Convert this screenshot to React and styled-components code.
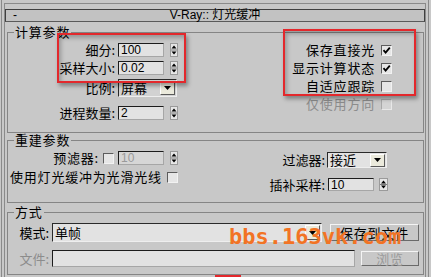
import React from 'react';
import styled, { createGlobalStyle } from 'styled-components';

const Global = createGlobalStyle`
  html, body { margin: 0; padding: 0; background: #c8c8c8; }
  body {
    font-family: "Noto Sans CJK SC", "Liberation Sans", sans-serif;
    color: #000;
  }
`;

const Screen = styled.div`
  position: relative;
  width: 431px;
  height: 277px;
  overflow: hidden;
  background: #c8c8c8;
  box-sizing: border-box;
  padding: 0 2px 0 1px;
`;

const Frame = styled.div`
  height: 100%;
  box-sizing: border-box;
  border-left: 1px solid #8a8a8a;
  border-right: 1px solid #8a8a8a;
  padding: 3px 2px 0 2px;
`;

const Rollout = styled.div`
  height: 100%;
  box-sizing: border-box;
  border-top: 1px solid #8a8a8a;
  border-left: 1px solid #8a8a8a;
  border-right: 1px solid #8a8a8a;
  padding-top: 5px;
`;

const Header = styled.div`
  box-sizing: border-box;
  height: 13px;
  display: grid;
  grid-template-columns: 1fr auto 1fr;
  align-items: center;
  background: #c2c2c2;
  border: 1px solid #404040;
  border-bottom-color: #5a5a5a;
  font-family: "Liberation Sans", "Noto Sans CJK SC", sans-serif;
  font-size: 12px;
  line-height: 11px;
`;

const HeaderDash = styled.span`
  padding-left: 7px;
`;

const HeaderTitle = styled.span`
  white-space: nowrap;
`;

const Group = styled.fieldset`
  margin: ${p => p.$mt}px 1px 0 2px;
  padding: 0;
  border: 1px solid #858585;
  height: ${p => p.$h}px;
  box-sizing: border-box;
  min-width: 0;
`;

const Legend = styled.legend`
  margin-left: 6px;
  padding: 0 1px;
  font-size: 13px;
  letter-spacing: 0.8px;
  line-height: 14px;
  height: 14px;
`;

const GroupBody = styled.div`
  display: flex;
  justify-content: space-between;
  align-items: flex-start;
`;

const Column = styled.div`
  display: flex;
  flex-direction: column;
  align-items: ${p => p.$align || 'flex-start'};
  padding: ${p => p.$pt || 0}px ${p => p.$pr || 0}px 0 ${p => p.$pl || 0}px;
`;

const Row = styled.div`
  display: flex;
  align-items: center;
  gap: ${p => p.$gap ?? 3}px;
  height: ${p => p.$h}px;
  margin-top: ${p => p.$mt || 0}px;
  padding-left: ${p => p.$pl || 0}px;
`;

const Label = styled.span`
  width: ${p => (p.$w ? `${p.$w}px` : 'auto')};
  flex: none;
  text-align: right;
  white-space: nowrap;
  font-size: 13px;
  letter-spacing: ${p => (p.$wide ? 0.8 : 0)}px;
  line-height: 14px;
  color: ${p => (p.$muted ? '#8c8c8c' : '#000')};
`;

const Field = styled.div`
  box-sizing: border-box;
  width: ${p => p.$w}px;
  height: ${p => p.$h || 14}px;
  flex: none;
  display: flex;
  align-items: center;
  padding-left: 2px;
  background: ${p => (p.$disabled ? '#d6d6d6' : '#e2e2e2')};
  border: 1px solid;
  border-color: #1c1c1c #a6a6a6 #a6a6a6 #1c1c1c;
  font-family: "Liberation Sans", "Noto Sans CJK SC", sans-serif;
  font-size: 12px;
  line-height: 12px;
  color: ${p => (p.$disabled ? '#9a9a9a' : '#000')};
`;

const SpinWrap = styled.div`
  display: flex;
  align-items: center;
  gap: ${p => p.$gap ?? 6}px;
`;

const SpinBox = styled.svg`
  display: block;
  flex: none;
`;

const Spinner = ({ h = 14, w = 8 }) => (
  <SpinBox width={w} height={h} viewBox={`0 0 ${w} ${h}`}>
    <rect x="0.5" y="0.5" width={w - 1} height={h - 1} fill="#e6e6e6" stroke="#9a9a9a" />
    <path d={`M${w / 2} 2.5 L${w / 2 + 2.5} 5.5 L${w / 2 - 2.5} 5.5 Z`} fill="#000" />
    <line x1="1" x2={w - 1} y1={h / 2} y2={h / 2} stroke="#7a7a7a" />
    <path d={`M${w / 2 - 2.5} ${h - 5.5} L${w / 2 + 2.5} ${h - 5.5} L${w / 2} ${h - 2.5} Z`} fill="#000" />
  </SpinBox>
);

const SpinField = ({ value, w = 46, h = 14, gap = 6, sw = 8, disabled }) => (
  <SpinWrap $gap={gap}>
    <Field $w={w} $h={h} $disabled={disabled}>{value}</Field>
    <Spinner h={h} w={sw} />
  </SpinWrap>
);

const Drop = styled.div`
  box-sizing: border-box;
  width: ${p => p.$w}px;
  height: ${p => p.$h}px;
  flex: none;
  display: flex;
  align-items: center;
  justify-content: space-between;
  padding: 0 1px 0 2px;
  background: ${p => (p.$light ? '#e2e2e2' : '#d2d2d2')};
  border: 1px solid;
  border-color: #2a2a2a #eeeeee #eeeeee #2a2a2a;
  font-size: 13px;
  line-height: 14px;
`;

const DropButton = styled.div`
  box-sizing: border-box;
  width: 15px;
  height: ${p => p.$h}px;
  display: flex;
  align-items: center;
  justify-content: center;
  background: #ebeadc;
  border: 1px solid;
  border-color: #ffffff #5a5a5a #5a5a5a #ffffff;
`;

const Dropdown = ({ value, w, h, bh, light }) => (
  <Drop $w={w} $h={h} $light={light}>
    <span>{value}</span>
    <DropButton $h={bh}>
      <svg width="7" height="4" viewBox="0 0 7 4">
        <path d="M0 0 L7 0 L3.5 4 Z" fill="#000" />
      </svg>
    </DropButton>
  </Drop>
);

const Box = styled.div`
  box-sizing: border-box;
  width: 11px;
  height: 11px;
  flex: none;
  display: flex;
  align-items: center;
  justify-content: center;
  background: ${p => (p.$disabled ? '#d4d4d4' : '#e6e6e6')};
  border: 1px solid;
  border-color: ${p => (p.$disabled ? '#a8a8a8 #e8e8e8 #e8e8e8 #a8a8a8' : '#5c5c5c #f2f2f2 #f2f2f2 #5c5c5c')};
`;

const Check = ({ checked, disabled }) => (
  <Box $disabled={disabled}>
    {checked && (
      <svg width="9" height="9" viewBox="0 0 9 9">
        <path d="M1.5 4.2 L3.6 6.6 L7.8 1.6" fill="none" stroke="#000" strokeWidth="1.8" />
      </svg>
    )}
  </Box>
);

const Button = styled.div`
  box-sizing: border-box;
  width: ${p => p.$w}px;
  height: ${p => p.$h}px;
  margin-left: ${p => p.$ml || 0}px;
  flex: none;
  display: flex;
  align-items: center;
  justify-content: center;
  background: #c8c8c8;
  border: 1px solid;
  border-color: #f4f4f4 #6a6a6a #6a6a6a #f4f4f4;
  font-size: 13px;
  letter-spacing: 0.8px;
  line-height: 14px;
  color: ${p => (p.$disabled ? '#9a9a9a' : '#000')};
`;

const Annotation = styled.div`
  position: absolute;
  left: ${p => p.$x}px;
  top: ${p => p.$y}px;
  width: ${p => p.$w}px;
  height: ${p => p.$h}px;
  box-sizing: border-box;
  border: 2px solid #e3282c;
  box-shadow: 2px 3px 4px rgba(0, 0, 0, 0.35), inset 2px 3px 4px rgba(0, 0, 0, 0.25);
  pointer-events: none;
`;

const RedEdge = styled.div`
  position: absolute;
  left: 215px;
  top: 275px;
  width: 26px;
  height: 2px;
  background: #e3282c;
`;

const Watermark = styled.div`
  position: absolute;
  left: 229px;
  top: 226px;
  font-family: "DejaVu Sans Mono", "Liberation Mono", monospace;
  font-weight: bold;
  font-size: 22px;
  line-height: 22px;
  color: #f27324;
  white-space: nowrap;
  pointer-events: none;
`;

export default function App() {
  return (
    <>
      <Global />
      <Screen>
        <Frame>
          <Rollout>
            <Header>
              <HeaderDash>-</HeaderDash>
              <HeaderTitle>V-Ray:: 灯光缓冲</HeaderTitle>
              <span />
            </Header>

            <Group $mt={3} $h={108}>
              <Legend>计算参数</Legend>
              <GroupBody>
                <Column $pt={4}>
                  <Row $h={14} $gap={3}>
                    <Label $w={107}>细分:</Label>
                    <SpinField value="100" />
                  </Row>
                  <Row $h={14} $gap={3} $mt={4}>
                    <Label $w={107}>采样大小:</Label>
                    <SpinField value="0.02" />
                  </Row>
                  <Row $h={18} $gap={3} $mt={4}>
                    <Label $w={107}>比例:</Label>
                    <Dropdown value="屏幕" w={59} h={18} bh={14} />
                  </Row>
                  <Row $h={14} $gap={3} $mt={9}>
                    <Label $w={107}>进程数量:</Label>
                    <SpinField value="2" />
                  </Row>
                </Column>
                <Column $align="flex-end" $pt={2} $pr={31}>
                  <Row $h={18} $gap={6}>
                    <Label $wide>保存直接光</Label>
                    <Check checked />
                  </Row>
                  <Row $h={18} $gap={6}>
                    <Label $wide>显示计算状态</Label>
                    <Check checked />
                  </Row>
                  <Row $h={18} $gap={6}>
                    <Label $wide>自适应跟踪</Label>
                    <Check />
                  </Row>
                  <Row $h={18} $gap={6}>
                    <Label $wide $muted>仅使用方向</Label>
                    <Check disabled />
                  </Row>
                </Column>
              </GroupBody>
            </Group>

            <Group $mt={0} $h={70}>
              <Legend>重建参数</Legend>
              <GroupBody>
                <Column $pt={4}>
                  <Row $h={14} $gap={4}>
                    <Label $w={91} $wide>预滤器:</Label>
                    <Check />
                    <SpinField value="10" disabled />
                  </Row>
                  <Row $h={14} $gap={5} $mt={5} $pl={2}>
                    <Label $wide>使用灯光缓冲为光滑光线</Label>
                    <Check />
                  </Row>
                </Column>
                <Column $pt={5} $pr={35}>
                  <Row $h={16} $gap={2}>
                    <Label $w={57}>过滤器:</Label>
                    <Dropdown value="接近" w={60} h={16} bh={13} light />
                  </Row>
                  <Row $h={13} $gap={3} $mt={10}>
                    <Label $w={57}>插补采样:</Label>
                    <SpinField value="10" h={13} gap={5} sw={9} />
                  </Row>
                </Column>
              </GroupBody>
            </Group>

            <Group $mt={2} $h={70}>
              <Legend>方式</Legend>
              <Column $pt={4}>
                <Row $h={19} $gap={3}>
                  <Label $w={41}>模式:</Label>
                  <Dropdown value="单帧" w={270} h={19} bh={15} light />
                  <Button $w={89} $h={17} $ml={5}>保存到文件</Button>
                </Row>
                <Row $h={17} $gap={3} $mt={8}>
                  <Label $w={41} $muted>文件:</Label>
                  <Field $w={303} $h={17} />
                  <Button $w={58} $h={15} $ml={3} $disabled>浏览</Button>
                </Row>
              </Column>
            </Group>
          </Rollout>
        </Frame>

        <Annotation $x={57} $y={33} $w={129} $h={50} />
        <Annotation $x={283} $y={29} $w={133} $h={67} />
        <RedEdge />
        <Watermark>bbs.163vk.com</Watermark>
      </Screen>
    </>
  );
}
